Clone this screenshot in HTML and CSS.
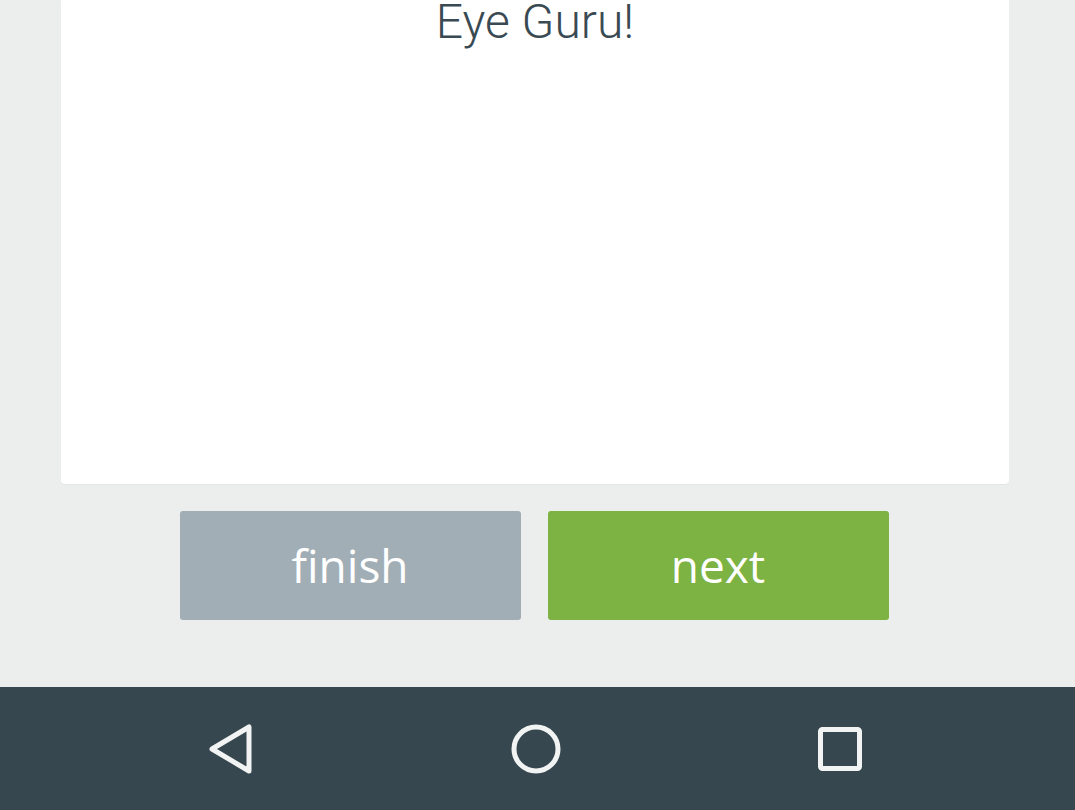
FILE: index.html
```html
<!DOCTYPE html>
<html>
<head>
<meta charset="utf-8">
<link rel="stylesheet" href="styles.css">
</head>
<body>
<div class="screen">
  <div class="content">
    <div class="card">
      <div class="title">Eye Guru!</div>
    </div>
    <div class="actions">
      <button class="btn btn-finish">finish</button>
      <button class="btn btn-next">next</button>
    </div>
  </div>
  <nav class="navbar">
    <svg class="nav-icon" width="48" height="52" viewBox="0 0 48 52">
      <path d="M42 4 L42 48 L5 26 Z" fill="none" stroke="#f2f4f4" stroke-width="5" stroke-linejoin="round"/>
    </svg>
    <svg class="nav-icon" width="52" height="52" viewBox="0 0 52 52">
      <circle cx="26" cy="26" r="22" fill="none" stroke="#f2f4f4" stroke-width="5"/>
    </svg>
    <svg class="nav-icon" width="48" height="48" viewBox="0 0 48 48">
      <rect x="4.5" y="4.5" width="39" height="39" rx="2" fill="none" stroke="#f2f4f4" stroke-width="5"/>
    </svg>
  </nav>
</div>
</body>
</html>
```

FILE: styles.css
```css
html, body {
  margin: 0;
  padding: 0;
}
body {
  background: #eceeee;
  width: 1075px;
  height: 810px;
  overflow: hidden;
}
.screen {
  display: flex;
  flex-direction: column;
  height: 810px;
}
.content {
  flex: 1;
  display: flex;
  flex-direction: column;
}
.card {
  margin: 0 66px 0 61px;
  height: 484px;
  background: #ffffff;
  border-radius: 0 0 4px 4px;
  box-shadow: 0 1px 1px rgba(0,0,0,0.04);
  box-sizing: border-box;
  display: flex;
  justify-content: center;
}
.title {
  font-family: Roboto, "Liberation Sans", sans-serif;
  font-weight: 300;
  font-size: 48px;
  line-height: 48px;
  margin-top: -2px;
  color: #3a4a52;
}
.actions {
  display: flex;
  justify-content: center;
  gap: 27px;
  margin-top: 27px;
  padding-right: 7px;
}
.btn {
  width: 341px;
  height: 109px;
  border: none;
  border-radius: 3px;
  color: #ffffff;
  font-family: "Open Sans", "Liberation Sans", sans-serif;
  font-size: 46px;
  font-weight: 400;
  padding: 0;
  padding-bottom: 2px;
}
.btn-finish {
  background: #a1aeb6;
}
.btn-next {
  background: #7cb342;
}
.navbar {
  height: 123px;
  background: #37474f;
  display: flex;
  align-items: center;
  padding-left: 207px;
}
.nav-icon:nth-child(1) {
  margin-right: 255px;
  margin-top: 1px;
}
.nav-icon:nth-child(2) {
  margin-right: 254px;
}
```
